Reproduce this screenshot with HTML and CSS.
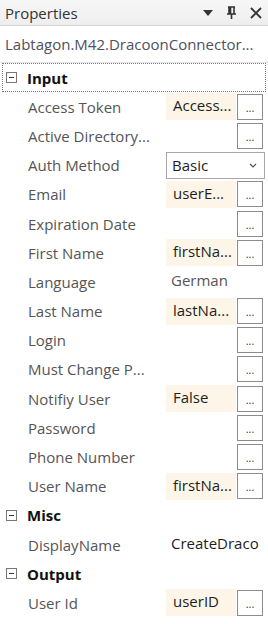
FILE: index.html
```html
<!DOCTYPE html>
<html lang="en">
<head>
    <meta charset="UTF-8">
    <title>Properties</title>
    <link rel="stylesheet" href="styles.css">
</head>
<body>
    <div class="panel">
        <!-- Titelleiste -->
        <div class="titlebar">
            <span class="title">Properties</span>
            <div class="title-tools">
                <svg width="10" height="6" viewBox="0 0 10 6"><path d="M0 0 H10 L5 6 Z" fill="#333"/></svg>
                <svg width="11" height="13" viewBox="0 0 11 13"><path d="M2 1 H9 M3 1 V8 M8 1 V8 M4.5 1 V8 M1 8 H10 M5.5 8 V13" stroke="#333" stroke-width="1.6" fill="none"/></svg>
                <svg width="12" height="12" viewBox="0 0 12 12"><path d="M1 1 L11 11 M11 1 L1 11" stroke="#333" stroke-width="1.8"/></svg>
            </div>
        </div>
        <div class="object-name">Labtagon.M42.DracoonConnector...</div>

        <div class="grid">
            <div class="category focused"><span class="toggle"></span>Input</div>
            <div class="row"><span class="label">Access Token</span><span class="value filled">Access...</span><span class="btn">...</span></div>
            <div class="row"><span class="label">Active Directory...</span><span class="value"></span><span class="btn">...</span></div>
            <div class="row"><span class="label">Auth Method</span><span class="combo">Basic<svg width="8" height="5" viewBox="0 0 8 5"><path d="M1 1 L4 4 L7 1" stroke="#555" stroke-width="1.2" fill="none"/></svg></span></div>
            <div class="row"><span class="label">Email</span><span class="value filled">userE...</span><span class="btn">...</span></div>
            <div class="row"><span class="label">Expiration Date</span><span class="value"></span><span class="btn">...</span></div>
            <div class="row"><span class="label">First Name</span><span class="value filled">firstNa...</span><span class="btn">...</span></div>
            <div class="row"><span class="label">Language</span><span class="value plain">German</span></div>
            <div class="row"><span class="label">Last Name</span><span class="value filled">lastNa...</span><span class="btn">...</span></div>
            <div class="row"><span class="label">Login</span><span class="value"></span><span class="btn">...</span></div>
            <div class="row"><span class="label">Must Change P...</span><span class="value"></span><span class="btn">...</span></div>
            <div class="row"><span class="label">Notifiy User</span><span class="value filled">False</span><span class="btn">...</span></div>
            <div class="row"><span class="label">Password</span><span class="value"></span><span class="btn">...</span></div>
            <div class="row"><span class="label">Phone Number</span><span class="value"></span><span class="btn">...</span></div>
            <div class="row"><span class="label">User Name</span><span class="value filled">firstNa...</span><span class="btn">...</span></div>

            <div class="category"><span class="toggle"></span>Misc</div>
            <div class="row"><span class="label">DisplayName</span><span class="value wide">CreateDraco</span></div>

            <div class="category"><span class="toggle"></span>Output</div>
            <div class="row"><span class="label">User Id</span><span class="value filled">userID</span><span class="btn">...</span></div>
        </div>
    </div>
</body>
</html>
```

FILE: styles.css
```css
body {
    margin: 0;
    background: #fff;
    font-family: 'Segoe UI', 'Open Sans', Arial, sans-serif;
    overflow: hidden;
}
.panel {
    width: 268px;
    height: 624px;
    overflow: hidden;
    background: #fff;
}
.titlebar {
    height: 25px;
    display: flex;
    align-items: center;
    justify-content: space-between;
    padding: 0 6px 0 5px;
    background: linear-gradient(#f7f7f7, #eeeeee);
    border-bottom: 1px solid #d4d4d4;
}
.title {
    font-size: 15px;
    color: #333;
}
.title-tools {
    display: flex;
    align-items: center;
    gap: 13px;
}
.object-name {
    height: 36px;
    line-height: 36px;
    padding-left: 5px;
    font-size: 15px;
    color: #50505e;
    white-space: nowrap;
    border-bottom: 1px solid #e4e4e4;
}
.grid {
    font-size: 15px;
}
.category {
    height: 29.2px;
    display: flex;
    align-items: center;
    font-weight: 700;
    color: #111;
    box-sizing: border-box;
    margin: 0 2px;
    padding-left: 4px;
}
.category.focused {
    border: 1px dotted #777;
    padding-left: 3px;
}
.toggle {
    width: 9px;
    height: 9px;
    border: 1px solid #777;
    margin-right: 10px;
    position: relative;
}
.toggle::after {
    content: '';
    position: absolute;
    left: 2px;
    top: 4px;
    width: 5px;
    height: 1px;
    background: #333;
}
.row {
    height: 29.2px;
    display: flex;
    align-items: center;
    padding-left: 28px;
    white-space: nowrap;
}
.label {
    width: 138px;
    flex: none;
    color: #555;
    overflow: hidden;
}
.value {
    width: 63px;
    height: 27px;
    line-height: 25px;
    padding-left: 7px;
    flex: none;
    color: #1e1e1e;
    overflow: hidden;
}
.value.filled {
    background: #fdf6e8;
}
.value.plain {
    padding-left: 5px;
    color: #555;
}
.value.wide {
    width: 97px;
    padding-left: 5px;
}
.btn {
    width: 24px;
    height: 24px;
    margin-left: 1px;
    flex: none;
    border: 1px solid #8c8c8c;
    background: #fff;
    color: #333;
    font-size: 11px;
    line-height: 26px;
    text-align: center;
}
.combo {
    width: 85px;
    height: 25px;
    padding: 0 7px 0 5px;
    border: 1px solid #a8a8a8;
    display: flex;
    align-items: center;
    justify-content: space-between;
    color: #1e1e1e;
}
```
